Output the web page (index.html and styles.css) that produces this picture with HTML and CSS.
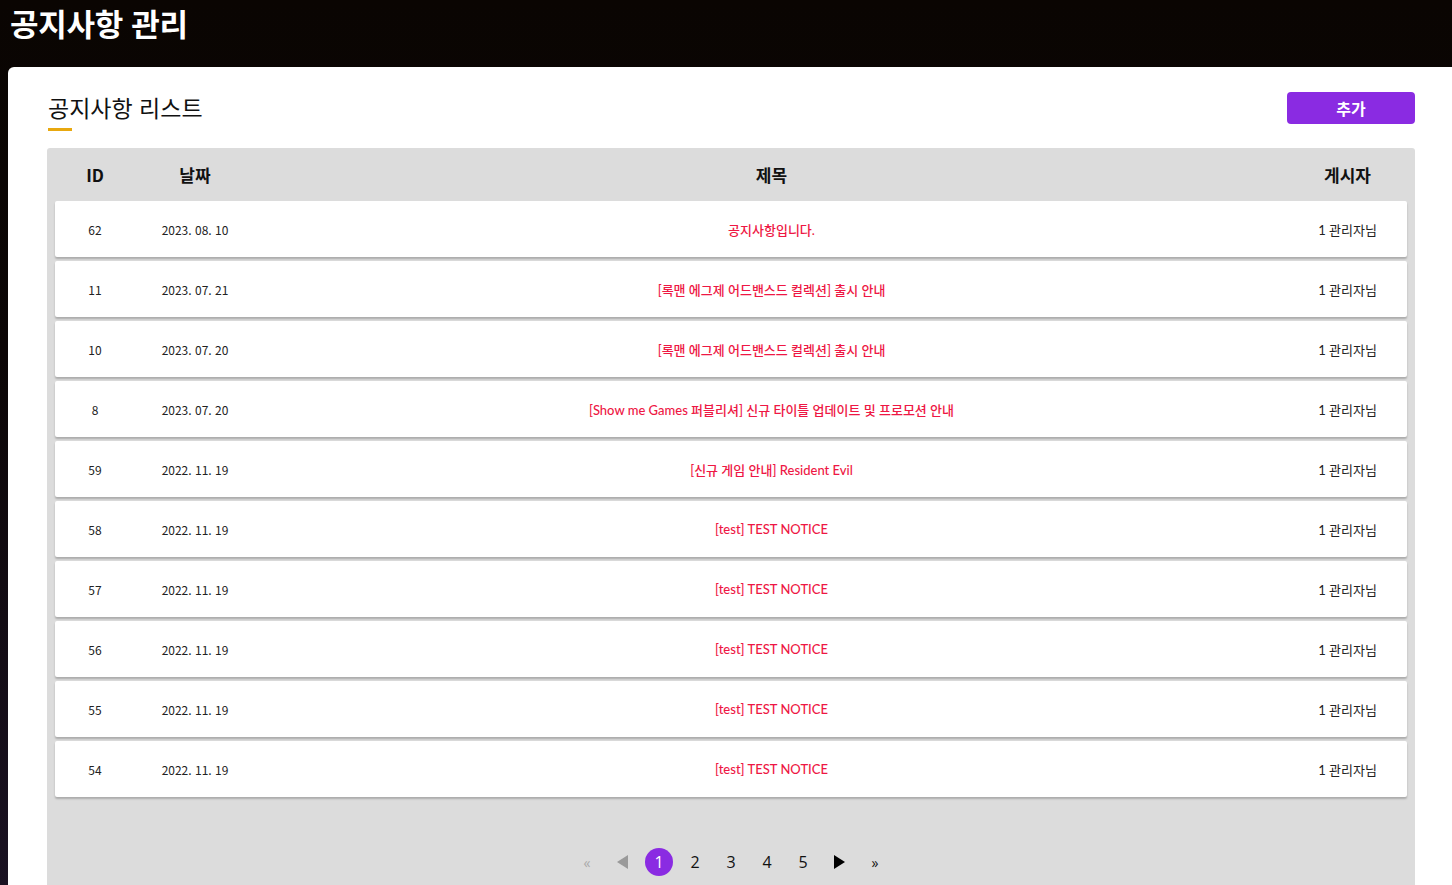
FILE: index.html
```html
<!DOCTYPE html>
<html lang="ko">
<head>
<meta charset="utf-8">
<link rel="stylesheet" href="styles.css">
</head>
<body>
<header class="topbar"><h1>공지사항 관리</h1></header>
<div class="main">
  <section class="card">
    <div class="card-head">
      <div class="title-wrap">
        <h2>공지사항 리스트</h2>
        <div class="underline"></div>
      </div>
      <button class="add-btn">추가</button>
    </div>
    <div class="table">
      <div class="thead">
        <div class="c-id">ID</div>
        <div class="c-date">날짜</div>
        <div class="c-title">제목</div>
        <div class="c-author">게시자</div>
      </div>
      <div class="row"><div class="c-id">62</div><div class="c-date">2023. 08. 10</div><div class="c-title red">공지사항입니다.</div><div class="c-author">1 관리자님</div></div>
      <div class="row"><div class="c-id">11</div><div class="c-date">2023. 07. 21</div><div class="c-title red">[록맨 에그제 어드밴스드 컬렉션] 출시 안내</div><div class="c-author">1 관리자님</div></div>
      <div class="row"><div class="c-id">10</div><div class="c-date">2023. 07. 20</div><div class="c-title red">[록맨 에그제 어드밴스드 컬렉션] 출시 안내</div><div class="c-author">1 관리자님</div></div>
      <div class="row"><div class="c-id">8</div><div class="c-date">2023. 07. 20</div><div class="c-title red">[Show me Games 퍼블리셔] 신규 타이틀 업데이트 및 프로모션 안내</div><div class="c-author">1 관리자님</div></div>
      <div class="row"><div class="c-id">59</div><div class="c-date">2022. 11. 19</div><div class="c-title red">[신규 게임 안내] Resident Evil</div><div class="c-author">1 관리자님</div></div>
      <div class="row"><div class="c-id">58</div><div class="c-date">2022. 11. 19</div><div class="c-title red">[test] TEST NOTICE</div><div class="c-author">1 관리자님</div></div>
      <div class="row"><div class="c-id">57</div><div class="c-date">2022. 11. 19</div><div class="c-title red">[test] TEST NOTICE</div><div class="c-author">1 관리자님</div></div>
      <div class="row"><div class="c-id">56</div><div class="c-date">2022. 11. 19</div><div class="c-title red">[test] TEST NOTICE</div><div class="c-author">1 관리자님</div></div>
      <div class="row"><div class="c-id">55</div><div class="c-date">2022. 11. 19</div><div class="c-title red">[test] TEST NOTICE</div><div class="c-author">1 관리자님</div></div>
      <div class="row"><div class="c-id">54</div><div class="c-date">2022. 11. 19</div><div class="c-title red">[test] TEST NOTICE</div><div class="c-author">1 관리자님</div></div>
      <nav class="pager">
        <span class="pg dim dbl">«</span>
        <span class="pg dim"><svg width="12" height="14" viewBox="0 0 12 14"><path d="M11 0 L0 7 L11 14 Z" fill="#9a9a9a"/></svg></span>
        <span class="pg active">1</span>
        <span class="pg">2</span>
        <span class="pg">3</span>
        <span class="pg">4</span>
        <span class="pg">5</span>
        <span class="pg"><svg width="12" height="14" viewBox="0 0 12 14"><path d="M1 0 L12 7 L1 14 Z" fill="#000"/></svg></span>
        <span class="pg dbl">»</span>
      </nav>
    </div>
  </section>
</div>
</body>
</html>
```

FILE: styles.css
```css
* { box-sizing: border-box; }
html, body { margin: 0; padding: 0; }
body {
  width: 1452px;
  height: 885px;
  overflow: hidden;
  background: linear-gradient(180deg, #0a0502 0%, #0c0606 40%, #1a1222 100%);
  font-family: "Noto Sans CJK KR", "Noto Sans", sans-serif;
  color: #111;
}
.topbar {
  height: 67px;
  padding: 1px 0 0 10px;
}
.topbar h1 {
  margin: 0;
  color: #fff;
  font-size: 31px;
  font-weight: 700;
  line-height: 44px;
  letter-spacing: -0.3px;
}
.main {
  padding-left: 8px;
}
.card {
  background: #fff;
  border-top-left-radius: 6px;
  padding: 25px 37px 0 39px;
  min-height: 818px;
}
.card-head {
  display: flex;
  justify-content: space-between;
  align-items: flex-start;
}
.title-wrap { padding-left: 1px; }
.card-head h2 {
  margin: 0;
  font-size: 23px;
  font-weight: 400;
  line-height: 30px;
  color: #111;
}
.underline {
  width: 24px;
  height: 3px;
  background: #e8a80f;
  margin-top: 6px;
}
.add-btn {
  width: 128px;
  height: 32px;
  border: none;
  border-radius: 4px;
  background: #8a2be2;
  color: #fff;
  font-family: inherit;
  font-size: 16px;
  font-weight: 700;
  padding: 0;
}
.table {
  margin-top: 17px;
  background: #dcdcdc;
  border-radius: 3px 3px 0 0;
  padding: 0 8px;
  min-height: 737px;
}
.thead, .row {
  display: grid;
  grid-template-columns: 80px 120px 1fr 119px;
  align-items: center;
  text-align: center;
}
.thead {
  height: 53px;
  font-size: 17px;
  font-weight: 700;
  color: #111;
}
.row {
  height: 56px;
  background: #fff;
  border-radius: 2px;
  margin-bottom: 4px;
  font-size: 12px;
  color: #222;
  box-shadow: 0 2px 2px rgba(0,0,0,0.22);
}
.row .c-title, .row .c-author {
  font-family: Lato, "Noto Sans CJK KR", sans-serif;
  font-size: 13px;
}
.row .c-title { font-weight: 500; }
.red { color: #ee1744; }
.pager {
  display: flex;
  justify-content: center;
  align-items: center;
  gap: 8px;
  padding-top: 47px;
}
.pg {
  width: 28px;
  height: 28px;
  display: flex;
  align-items: center;
  justify-content: center;
  font-family: "Open Sans", "Noto Sans", sans-serif;
  font-size: 16px;
  color: #111;
  border-radius: 50%;
}
.pg.dim { color: #aaa; }
.pg.dbl { font-size: 14px; }
.pg.active {
  background: #8a2be2;
  color: #fff;
}
```
